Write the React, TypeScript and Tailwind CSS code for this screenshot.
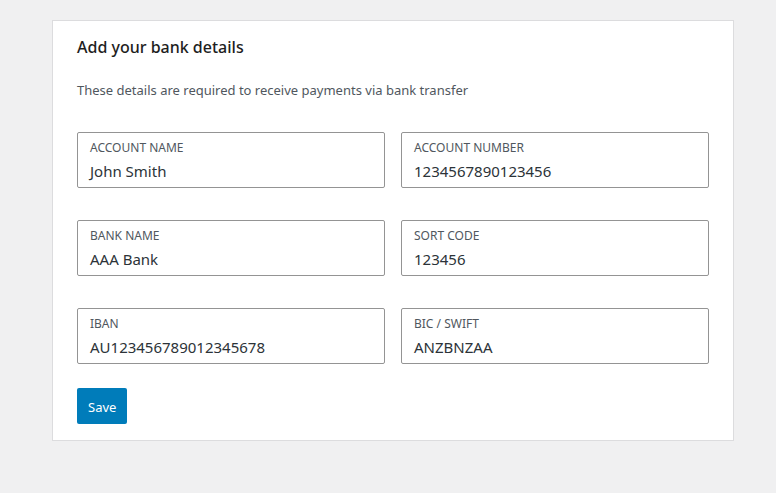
import React from "react";

const fields: [string, string][] = [
  ["ACCOUNT NAME", "John Smith"],
  ["ACCOUNT NUMBER", "1234567890123456"],
  ["BANK NAME", "AAA Bank"],
  ["SORT CODE", "123456"],
  ["IBAN", "AU123456789012345678"],
  ["BIC / SWIFT", "ANZBNZAA"],
];

export default function App() {
  return (
    <div
      className="min-h-[493px] w-full bg-[#f0f0f1] pt-[20px] pl-[52px] pr-[42px]"
      style={{ fontFamily: '"Noto Sans", "Open Sans", sans-serif' }}
    >
      <div className="w-[682px] border border-[#dcdcde] bg-white px-[24px] pt-[15px] pb-[16px]">
        <h2 className="text-[16px] font-medium leading-[22px] text-[#1e1e1e]">Add your bank details</h2>
        <p className="mt-[22px] text-[13px] leading-[20px] text-[#50575e]">
          These details are required to receive payments via bank transfer
        </p>
        <div className="mt-[32px] grid grid-cols-2 gap-x-[16px] gap-y-[32px]">
          {fields.map(([label, value]) => (
            <div
              key={label}
              className="flex h-[56px] flex-col justify-center rounded-[2px] border border-[#949494] px-[12px]"
            >
              <div className="text-[12px] leading-[16px] text-[#50575e]">{label}</div>
              <div className="mt-[5px] text-[15px] leading-[20px] text-[#2c3338]">{value}</div>
            </div>
          ))}
        </div>
        <button className="mt-[24px] h-[36px] rounded-[2px] bg-[#007cba] px-[11px] pt-[3px] text-[13px] text-white">
          Save
        </button>
      </div>
    </div>
  );
}
